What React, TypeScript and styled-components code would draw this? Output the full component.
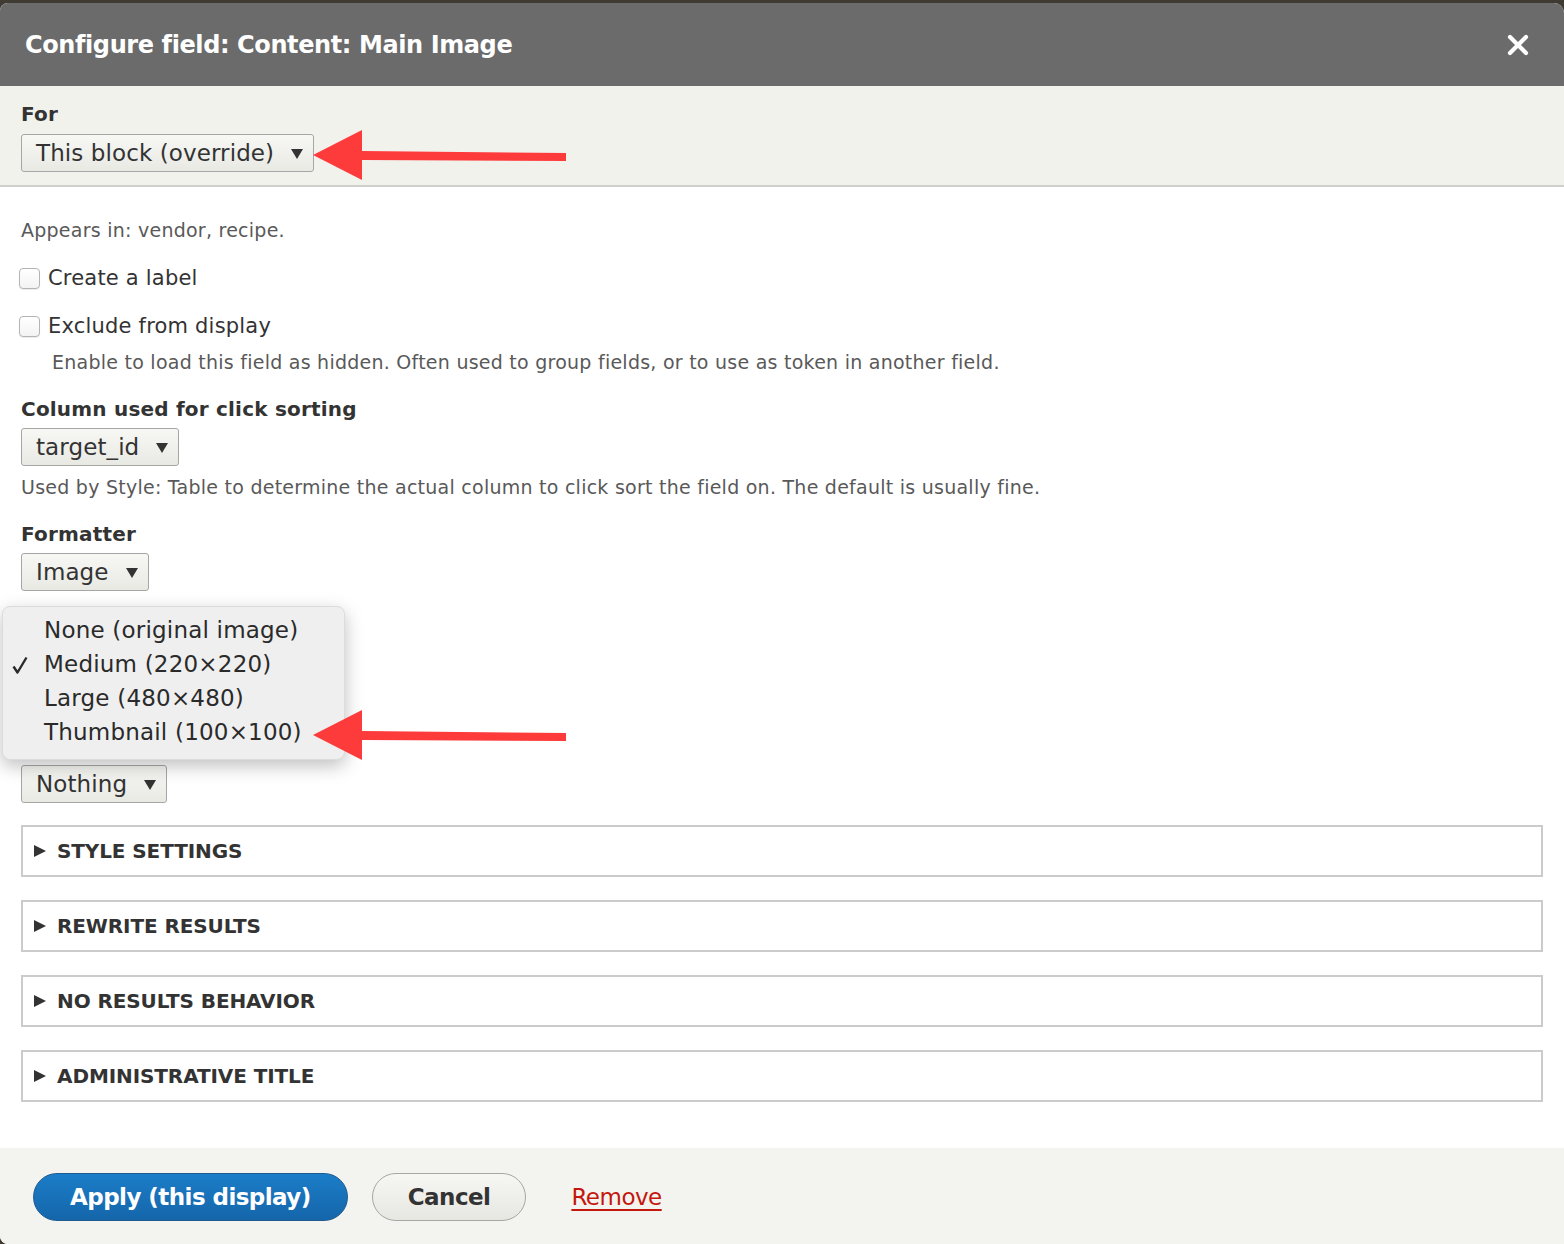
import React from "react";
import styled, { createGlobalStyle } from "styled-components";

const FONT = `"DejaVu Sans", "Liberation Sans", sans-serif`;

const Global = createGlobalStyle`
  html, body { margin: 0; padding: 0; }
  body {
    background: #3f3b33;
    font-family: ${FONT};
    color: #333;
    overflow: hidden;
  }
`;

const Dialog = styled.div`
  position: relative;
  margin-top: 3px;
  height: 1241px;
  background: #fff;
  border-radius: 8px 10px 0 8px;
  overflow: hidden;
  display: flex;
  flex-direction: column;
`;

const Header = styled.header`
  height: 83px;
  flex: none;
  background: #6b6b6b;
  display: flex;
  align-items: center;
  justify-content: space-between;
  padding: 0 35px 0 25px;
`;

const Title = styled.h1`
  margin: 0;
  font-size: 24px;
  font-weight: bold;
  color: #fff;
  letter-spacing: -0.4px;
`;

const CloseBtn = styled.button`
  border: 0;
  background: none;
  padding: 0;
  width: 22px;
  height: 22px;
  display: flex;
  cursor: pointer;
`;

const ForSection = styled.section`
  flex: none;
  background: #f2f2ed;
  border-bottom: 2px solid #cfcfcb;
  padding: 15px 21px 13px;
  box-sizing: border-box;
  height: 101px;
`;

const Body = styled.div`
  padding: 31px 21px 0;
  flex: 1;
`;

const Covered = styled.div`
  visibility: hidden;
`;

const Label = styled.div<{ $mt?: number }>`
  font-size: 20px;
  font-weight: bold;
  line-height: 26px;
  color: #333;
  margin-top: ${(p) => p.$mt ?? 0}px;
  letter-spacing: 0.2px;
`;

const SelectBox = styled.div<{ $mt?: number }>`
  display: inline-flex;
  align-items: center;
  gap: 17px;
  height: 38px;
  box-sizing: border-box;
  padding: 0 10px 0 14px;
  margin-top: ${(p) => p.$mt ?? 6}px;
  border: 1px solid #a6a6a6;
  border-radius: 3px;
  background: linear-gradient(#f7f7f4, #e9e9e4);
  font-size: 23px;
  color: #333;
  letter-spacing: 0.1px;
`;

const Caret = styled.span`
  width: 0;
  height: 0;
  border-left: 6.5px solid transparent;
  border-right: 6.5px solid transparent;
  border-top: 10px solid #333;
  margin-top: 2px;
`;

const Select = ({ value, mt }: { value: string; mt?: number }) => (
  <div>
    <SelectBox $mt={mt}>
      <span>{value}</span>
      <Caret />
    </SelectBox>
  </div>
);

const Desc = styled.div<{ $mt?: number; $indent?: number }>`
  font-size: 19px;
  line-height: 24px;
  color: #595959;
  margin-top: ${(p) => p.$mt ?? 0}px;
  padding-left: ${(p) => p.$indent ?? 0}px;
  letter-spacing: 0.25px;
`;

const CheckRow = styled.label<{ $mt?: number }>`
  display: flex;
  align-items: center;
  gap: 8px;
  height: 30px;
  margin-top: ${(p) => p.$mt ?? 0}px;
  margin-left: -2px;
  font-size: 21px;
  color: #333;
  letter-spacing: 0.2px;
`;

const CheckBox = styled.span`
  width: 21px;
  height: 21px;
  box-sizing: border-box;
  border: 1px solid #b4b4b4;
  border-radius: 4px;
  background: linear-gradient(#fff, #f3f3f3);
  box-shadow: 0 1px 1px rgba(0, 0, 0, 0.08);
`;

const DetailsList = styled.div`
  margin-top: 22px;
  display: flex;
  flex-direction: column;
  gap: 23px;
`;

const Details = styled.div`
  height: 52px;
  box-sizing: border-box;
  border: 2px solid #cbcbcb;
  display: flex;
  align-items: center;
  gap: 11px;
  padding-left: 11px;
  font-size: 20px;
  font-weight: bold;
  text-transform: uppercase;
  color: #333;
  letter-spacing: -0.1px;
`;

const Tri = styled.span`
  width: 0;
  height: 0;
  border-top: 6.5px solid transparent;
  border-bottom: 6.5px solid transparent;
  border-left: 12px solid #333;
`;

const Footer = styled.footer`
  flex: none;
  height: 96px;
  background: #f3f3ef;
  padding: 25px 33px 0;
  box-sizing: border-box;
`;

const ButtonRow = styled.div`
  display: flex;
  align-items: center;
  height: 48px;
  gap: 24px;
`;

const Button = styled.button<{ $primary?: boolean }>`
  height: 48px;
  border-radius: 24px;
  padding: 0 ${(p) => (p.$primary ? 36 : 35)}px;
  font-family: ${FONT};
  font-size: 23px;
  font-weight: bold;
  letter-spacing: -0.55px;
  cursor: pointer;
  color: ${(p) => (p.$primary ? "#fff" : "#333")};
  border: 1px solid ${(p) => (p.$primary ? "#1e5c90" : "#a6a6a6")};
  background: ${(p) =>
    p.$primary
      ? "linear-gradient(#1b7dc8, #1566aa)"
      : "linear-gradient(#f6f6f3, #e7e7e2)"};
`;

const RemoveLink = styled.a`
  margin-left: 21px;
  font-size: 23px;
  color: #c4170e;
  text-decoration: underline;
  text-underline-offset: 4px;
  letter-spacing: -0.5px;
`;

const Popup = styled.ul`
  position: absolute;
  left: 2px;
  top: 603px;
  width: 343px;
  height: 154px;
  box-sizing: border-box;
  margin: 0;
  padding: 6px 0 0;
  list-style: none;
  background: #efefef;
  border: 1px solid #dcdcdc;
  border-radius: 8px;
  box-shadow: 0 6px 18px rgba(0, 0, 0, 0.25);
`;

const PopItem = styled.li`
  position: relative;
  height: 34px;
  line-height: 34px;
  padding-left: 41px;
  font-size: 23px;
  color: #2a2a2a;
  letter-spacing: 0.2px;
`;

const Check = styled.svg`
  position: absolute;
  left: 9px;
  top: 9px;
  width: 16px;
  height: 18px;
`;

const Arrow = styled.svg<{ $top: number }>`
  position: absolute;
  left: 312px;
  top: ${(p) => p.$top}px;
  width: 256px;
  height: 52px;
  overflow: visible;
`;

const RedArrow = ({ top }: { top: number }) => (
  <Arrow $top={top} viewBox="0 0 256 52">
    <polygon points="1,25 50,0 50,21 254,23 254,31 50,30 50,50" fill="#fe3b3b" />
  </Arrow>
);

export default function App() {
  return (
    <>
      <Global />
      <Dialog>
        <Header>
          <Title>Configure field: Content: Main Image</Title>
          <CloseBtn aria-label="Close">
            <svg width="22" height="22" viewBox="0 0 22 22">
              <path d="M3 3 L19 19 M19 3 L3 19" stroke="#fff" strokeWidth="4.2" strokeLinecap="round" />
            </svg>
          </CloseBtn>
        </Header>
        <ForSection>
          <Label>For</Label>
          <Select value="This block (override)" mt={7} />
        </ForSection>
        <Body>
          <Desc>Appears in: vendor, recipe.</Desc>
          <CheckRow $mt={21}>
            <CheckBox />
            Create a label
          </CheckRow>
          <CheckRow $mt={18}>
            <CheckBox />
            Exclude from display
          </CheckRow>
          <Desc $mt={9} $indent={31}>
            Enable to load this field as hidden. Often used to group fields, or to use as token in another field.
          </Desc>
          <Label $mt={22}>Column used for click sorting</Label>
          <Select value="target_id" />
          <Desc $mt={9}>Used by Style: Table to determine the actual column to click sort the field on. The default is usually fine.</Desc>
          <Label $mt={22}>Formatter</Label>
          <Select value="Image" />
          <Covered aria-hidden="true">
            <Label $mt={22}>Image style</Label>
            <Select value="Medium (220×220)" />
            <Desc $mt={9}>Configure Image Styles</Desc>
            <Label $mt={17}>Link image to</Label>
          </Covered>
          <Select value="Nothing" />
          <DetailsList>
            {["Style settings", "Rewrite results", "No results behavior", "Administrative title"].map((t) => (
              <Details key={t}>
                <Tri />
                {t}
              </Details>
            ))}
          </DetailsList>
        </Body>
        <Footer>
          <ButtonRow>
            <Button $primary>Apply (this display)</Button>
            <Button>Cancel</Button>
            <RemoveLink href="#">Remove</RemoveLink>
          </ButtonRow>
        </Footer>
        <Popup>
          <PopItem>None (original image)</PopItem>
          <PopItem>
            <Check viewBox="0 0 16 18">
              <path d="M1.5 10.5 L5.5 16.5 L14.5 1.5" stroke="#2a2a2a" strokeWidth="2.4" fill="none" strokeLinejoin="round" />
            </Check>
            Medium (220×220)
          </PopItem>
          <PopItem>Large (480×480)</PopItem>
          <PopItem>Thumbnail (100×100)</PopItem>
        </Popup>
        <RedArrow top={127} />
        <RedArrow top={707} />
      </Dialog>
    </>
  );
}
